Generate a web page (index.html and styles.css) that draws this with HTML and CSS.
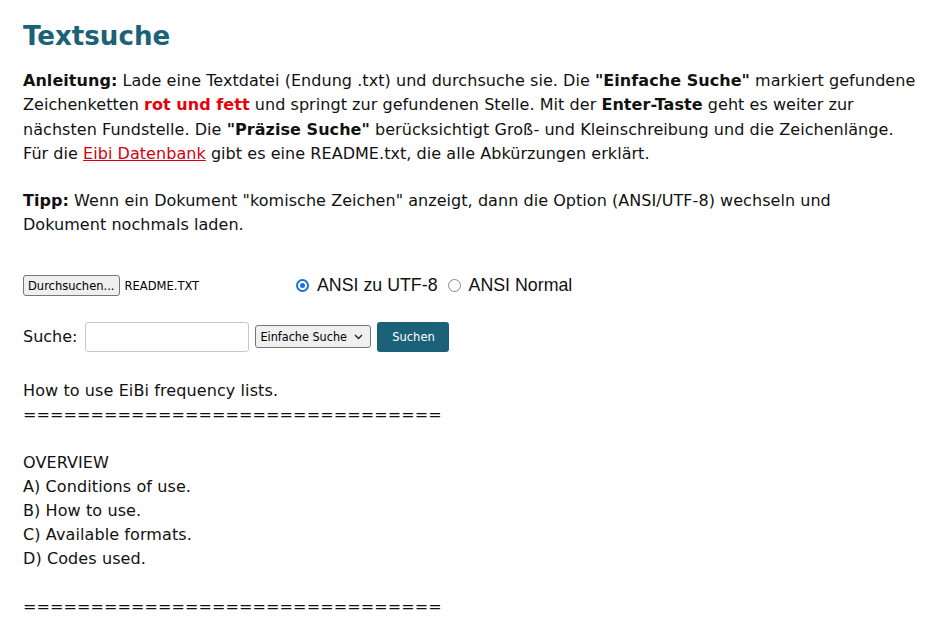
FILE: index.html
```html
<!DOCTYPE html>
<html lang="de">
<head>
<meta charset="utf-8">
<title>Textsuche</title>
<link rel="stylesheet" href="styles.css">
</head>
<body>
<main class="page">
  <h1 class="title">Textsuche</h1>
  <p class="text"><b>Anleitung:</b> Lade eine Textdatei (Endung .txt) und durchsuche sie. Die <b>"Einfache Suche"</b> markiert gefundene<br>Zeichenketten <b class="red">rot und fett</b> und springt zur gefundenen Stelle. Mit der <b>Enter-Taste</b> geht es weiter zur<br>nächsten Fundstelle. Die <b>"Präzise Suche"</b> berücksichtigt Groß- und Kleinschreibung und die Zeichenlänge.<br>Für die <a class="link" href="#">Eibi Datenbank</a> gibt es eine README.txt, die alle Abkürzungen erklärt.</p>
  <p class="text"><b>Tipp:</b> Wenn ein Dokument "komische Zeichen" anzeigt, dann die Option (ANSI/UTF-8) wechseln und<br>Dokument nochmals laden.</p>

  <div class="file-row">
    <div class="file">
      <span class="file-btn">Durchsuchen...</span>
      <span class="file-name">README.TXT</span>
    </div>
    <div class="radios">
      <label class="radio"><span class="dot on"></span>ANSI zu UTF-8</label>
      <label class="radio"><span class="dot"></span>ANSI Normal</label>
    </div>
  </div>

  <div class="search-row">
    <span class="search-label">Suche:</span>
    <span class="search-input"></span>
    <span class="select">Einfache Suche <svg class="chev" width="9" height="6" viewBox="0 0 9 6"><path d="M1 1l3.5 3.5L8 1" fill="none" stroke="#222" stroke-width="1.4"/></svg></span>
    <span class="btn">Suchen</span>
  </div>

  <div class="output">How to use EiBi frequency lists.
===============================

OVERVIEW
A) Conditions of use.
B) How to use.
C) Available formats.
D) Codes used.

===============================</div>
</main>
</body>
</html>
```

FILE: styles.css
```css
html, body {
  margin: 0;
  padding: 0;
  background: #fff;
}
.page {
  padding: 0 8px 0 23px;
  font-family: "DejaVu Sans", Verdana, sans-serif;
  font-size: 16px;
  color: #111;
}
.title {
  margin: 0;
  padding-top: 18px;
  font-size: 26.1px;
  line-height: 36px;
  font-weight: bold;
  color: #1b6279;
}
.text {
  margin: 15px 0 0;
  line-height: 24.3px;
  letter-spacing: 0.05px;
}
.text + .text {
  margin-top: 23px;
}
.red {
  color: #e8000b;
}
.link {
  color: #d4000d;
  text-decoration: underline;
}
.file-row {
  display: flex;
  align-items: center;
  margin-top: 37px;
  height: 22px;
}
.file {
  display: flex;
  align-items: center;
  gap: 5px;
  width: 273px;
}
.file-btn {
  font-family: "DejaVu Sans Condensed", "DejaVu Sans", sans-serif;
  font-size: 12.8px;
  color: #000;
  background: #efefef;
  border: 1px solid #767676;
  border-radius: 3px;
  padding: 2px 4px;
  line-height: 15px;
}
.file-name {
  font-family: "DejaVu Sans Condensed", "DejaVu Sans", sans-serif;
  font-size: 12.8px;
  color: #000;
}
.radios {
  display: flex;
  align-items: center;
  gap: 10px;
  font-family: "Liberation Sans", Arial, sans-serif;
  font-size: 17.8px;
  color: #111;
}
.radio {
  display: flex;
  align-items: center;
  gap: 8px;
}
.dot {
  width: 13px;
  height: 13px;
  border: 1.5px solid #8a8a8a;
  border-radius: 50%;
  box-sizing: border-box;
  position: relative;
}
.dot.on {
  border: 2px solid #1a6fd8;
}
.dot.on::after {
  content: "";
  position: absolute;
  left: 2px;
  top: 2px;
  width: 5px;
  height: 5px;
  border-radius: 50%;
  background: #1a6fd8;
}
.search-row {
  display: flex;
  align-items: center;
  margin-top: 25px;
  gap: 6px;
}
.search-label {
  margin-right: 2px;
}
.search-input {
  width: 162px;
  height: 28px;
  border: 1px solid #c8c8c8;
  border-radius: 3px;
}
.select {
  display: inline-flex;
  align-items: center;
  justify-content: space-between;
  font-family: "DejaVu Sans Condensed", "DejaVu Sans", sans-serif;
  font-size: 12.5px;
  color: #000;
  background: #efefef;
  border: 1px solid #767676;
  border-radius: 3px;
  padding: 0 7px 0 4px;
  height: 23px;
  box-sizing: border-box;
  width: 116px;
}
.btn {
  display: inline-flex;
  align-items: center;
  justify-content: center;
  width: 72px;
  height: 30px;
  background: #1b6279;
  color: #fff;
  border-radius: 3px;
  font-family: "DejaVu Sans Condensed", "DejaVu Sans", sans-serif;
  font-size: 12.8px;
}
.output {
  margin-top: 27px;
  white-space: pre;
  line-height: 24px;
  letter-spacing: 0.1px;
}
```
